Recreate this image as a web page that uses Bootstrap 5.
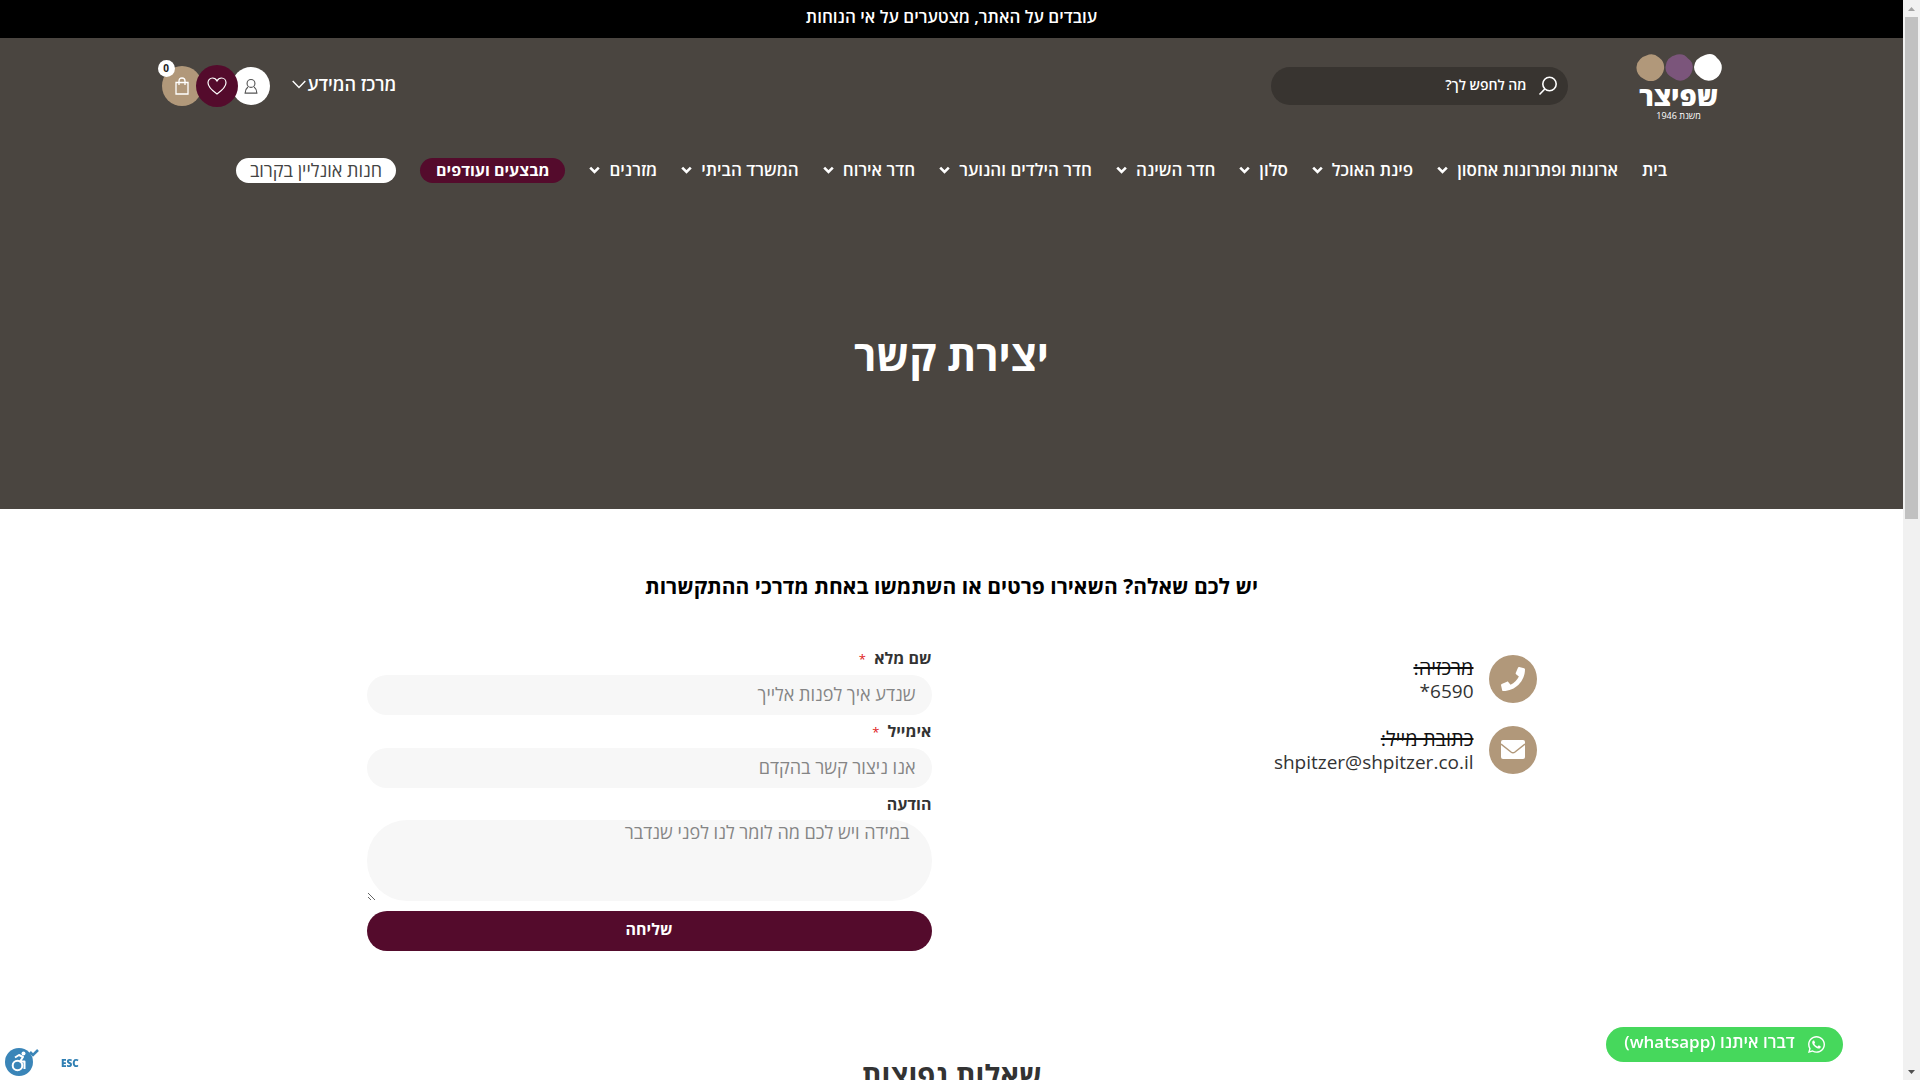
<!DOCTYPE html>
<html lang="he" dir="rtl">
<head>
<meta charset="utf-8">
<meta name="viewport" content="width=device-width, initial-scale=1">
<title>יצירת קשר - שפיצר</title>
<link href="https://cdn.jsdelivr.net/npm/bootstrap@5.3.0/dist/css/bootstrap.min.css" rel="stylesheet">
<style>
:root { --stone: #4a4540; --wine: #540b2c; --sand: #b1987a; --plum: #7b557b; --ink: #333; }
html, body { height: 100%; overflow: hidden; }
body { font-family: "Open Sans", "Noto Sans", "DejaVu Sans", sans-serif; font-size: 16px; line-height: 20px; color: var(--ink); background: #fff; }
a { text-decoration: none; color: inherit; }
svg { display: block; flex: none; }
.page-body { padding-right: 17px; }
.notice { height: 38px; padding-bottom: 4px; font-size: 17px; font-weight: 600; }
.hero { background: var(--stone); height: 471px; }
.head-row { max-width: 1586px; padding: 14px 23px 0 3px; height: 98px; }
.brand { width: 86px; color: #fff; padding-top: 1px; }
.brand-name { font-size: 27px; line-height: 29px; font-weight: 800; }
.brand-since { font-size: 9px; line-height: 12px; }
.search-pill { width: 297px; height: 38px; margin: 15px 68px 0 0; padding: 0 10px; gap: 11px; background: #383430; border-radius: 19px; }
.search-pill input { font-size: 14px; color: #fff; background: none; border: 0; outline: 0; padding: 0 0 2px; min-width: 0; }
.search-pill input::placeholder { color: #fff; opacity: 1; font-weight: 600; }
.search-pill button { background: none; border: 0; padding: 0; }
.info-link { font-size: 18px; font-weight: 600; gap: 2px; padding-top: 22px; }
.quick { margin: 13px 22px 0 0; }
.round-btn { width: 40px; height: 40px; border-radius: 50%; border: 0; padding: 0; margin-right: -6px; display: flex; align-items: center; justify-content: center; position: relative; }
.round-btn.user { background: #fff; width: 38px; height: 38px; margin-right: 0; z-index: 0; }
.round-btn.wish { background: var(--wine); width: 42px; height: 42px; z-index: 2; }
.round-btn.cart { background: var(--sand); z-index: 1; }
.count { position: absolute; left: -4px; top: -6px; width: 17px; height: 17px; border-radius: 50%; background: #fff; color: #222; font-size: 10px; line-height: 16px; font-weight: 700; }
.main-nav { gap: 24px; padding-top: 22px; font-size: 17px; font-weight: 600; color: #fff; }
.main-nav a { gap: 9px; height: 25px; padding-bottom: 2px; white-space: nowrap; }
.main-nav .tag { border-radius: 13px; padding: 0 14px 2px; }
.main-nav .tag-wine { background: var(--wine); font-size: 16px; font-weight: 700; padding: 0 16px 2px; }
.main-nav .tag-white { background: #fff; color: #444; font-size: 18px; font-weight: 400; }
.hero h1 { font-size: 42px; line-height: 52px; font-weight: 700; margin: 146px 0 0; }
.lead-line { font-size: 21px; line-height: 28px; font-weight: 700; color: #000; margin: 63px 0 48px; }
.contact-wrap { max-width: 1210px; padding: 0 20px; }
.contact-wrap > .row { --bs-gutter-x: 40px; }
.contact-list { padding-top: 7px; }
.contact-item { gap: 15px; margin-bottom: 23px; font-size: 19px; line-height: 23px; }
.contact-item .disc { width: 48px; height: 48px; border-radius: 50%; background: var(--sand); }
.contact-item .lines { padding-top: 1px; }
.contact-item s { color: #111; font-size: 20px; line-height: 20px; }
form label { font-weight: 700; display: block; line-height: 20px; margin-bottom: 6px; }
form label i { color: #e02020; font-style: normal; font-size: 13px; font-weight: 400; margin-right: 4px; }
.field { background: #f7f7f7; border: 0; border-radius: 20px; height: 40px; padding: 0 16px 2px; font-size: 18px; margin-bottom: 6px; }
.field::placeholder { color: #858585; }
textarea.field { height: 81px; border-radius: 40px; padding: 0 22px; margin-bottom: 10px; line-height: 24px; }
.send { background: var(--wine); color: #fff; border: 0; border-radius: 20px; height: 40px; font-weight: 700; padding: 0 0 4px; }
.faq { font-size: 29px; line-height: 40px; font-weight: 700; margin: 104px 0 0; }
.wa { position: fixed; right: 77px; bottom: 18px; width: 237px; height: 35px; border-radius: 18px; background: #46d85c; color: #fff; font-weight: 600; gap: 13px; }
.wa span { font-size: 17px; padding-bottom: 5px; white-space: nowrap; }
.access { position: fixed; left: 5px; bottom: 4px; gap: 21px; }
.access span { color: #2f7fb3; font-size: 10px; font-weight: 800; line-height: 10px; padding-top: 4px; }
.access button { background: none; border: 0; padding: 0; }
.rail { position: fixed; right: 0; top: 0; bottom: 0; width: 17px; background: #f1f1f1; }
.rail .thumb { width: 13px; height: 502px; background: #c1c1c1; }
</style>
</head>
<body>
<svg width="0" height="0" class="position-absolute" aria-hidden="true">
  <symbol id="chev" viewBox="0 0 11 8"><path d="M1.200 1.700 5.500 6l4.300-4.300" fill="none" stroke="#fff" stroke-width="2.600"/></symbol>
</svg>
<div class="page-body">
  <div class="notice bg-black text-white d-flex align-items-center justify-content-center">עובדים על האתר, מצטערים על אי הנוחות</div>
  <header class="hero text-white">
    <div class="head-row mx-auto d-flex align-items-start">
      <a class="brand d-flex flex-column align-items-center" href="#">
        <svg width="86" height="28" viewBox="0 0 86 28"><path d="M13 1.500Q18 0 23 4.500 29 9 28 16 27 23 20 27q-6 3-12-1Q0 22 .500 14 1 5 13 1.500" fill="#b1987a"/><path d="M41 1.500q7-1.500 11 4 6 4 4.500 11Q55 24 48 27q-6 2-11-2-8-4-7.500-11Q30 4 41 1.500" fill="#7b557b"/><path d="M69 2q8-3 12 3 6 5 4.500 12Q84 24 77 27q-7 2-12-2-7-5-7-11 1-9 11-12" fill="#fff"/></svg>
        <span class="brand-name">שפיצר</span>
        <span class="brand-since">משנת 1946</span>
      </a>
      <form class="search-pill d-flex align-items-center" role="search">
        <button type="button" aria-label="חיפוש"><svg width="20" height="20" viewBox="0 0 20 20" fill="none" stroke="#fff" stroke-width="1.600"><circle cx="11.500" cy="8" r="6.700"/><path d="M6.800 13 1.500 18.500"/></svg></button>
        <input class="flex-grow-1" type="search" aria-label="חיפוש באתר" placeholder="מה לחפש לך?">
      </form>
      <div class="flex-grow-1"></div>
      <a class="info-link d-flex align-items-center" href="#">מרכז המידע
        <svg width="14" height="9" viewBox="0 0 14 9" fill="none" stroke="#fff" stroke-width="1.400"><path d="m.700 1 6.300 6.500L13.300 1"/></svg></a>
      <div class="quick d-flex align-items-center">
        <button class="round-btn user" type="button" aria-label="החשבון שלי"><svg width="14" height="17" viewBox="0 0 16 18" fill="none" stroke="#555" stroke-width="1.300"><circle cx="8" cy="5.500" r="4.500"/><path d="M4.500 9.500C2.500 11 1.500 13 1.300 16.500h13.400C14.500 13 13.500 11 11.500 9.500"/></svg></button>
        <button class="round-btn wish" type="button" aria-label="מועדפים"><svg width="20" height="18" viewBox="0 0 20 18" fill="none" stroke="#fff" stroke-width="1.200"><path d="M10 17C5 13.500 1 10 1 5.800 1 3 3 1 5.500 1 7.500 1 9 2 10 4c1-2 2.500-3 4.500-3C17 1 19 3 19 5.800 19 10 15 13.500 10 17Z"/></svg></button>
        <button class="round-btn cart" type="button" aria-label="סל קניות"><svg width="14" height="18" viewBox="0 0 14 18" fill="none" stroke="#fff" stroke-width="1.300"><path d="M1 5.500h12v11.500H1ZM4 8V4q0-3 3-3t3 3v4"/></svg><span class="count">0</span></button>
      </div>
    </div>
    <nav class="main-nav d-flex justify-content-center">
      <a class="d-flex align-items-center" href="#">בית</a>
      <a class="d-flex align-items-center" href="#">ארונות ופתרונות אחסון <svg width="11" height="8"><use href="#chev"/></svg></a>
      <a class="d-flex align-items-center" href="#">פינת האוכל <svg width="11" height="8"><use href="#chev"/></svg></a>
      <a class="d-flex align-items-center" href="#">סלון <svg width="11" height="8"><use href="#chev"/></svg></a>
      <a class="d-flex align-items-center" href="#">חדר השינה <svg width="11" height="8"><use href="#chev"/></svg></a>
      <a class="d-flex align-items-center" href="#">חדר הילדים והנוער <svg width="11" height="8"><use href="#chev"/></svg></a>
      <a class="d-flex align-items-center" href="#">חדר אירוח <svg width="11" height="8"><use href="#chev"/></svg></a>
      <a class="d-flex align-items-center" href="#">המשרד הביתי <svg width="11" height="8"><use href="#chev"/></svg></a>
      <a class="d-flex align-items-center" href="#">מזרנים <svg width="11" height="8"><use href="#chev"/></svg></a>
      <a class="d-flex align-items-center tag tag-wine" href="#">מבצעים ועודפים</a>
      <a class="d-flex align-items-center tag tag-white" href="#">חנות אונליין בקרוב</a>
    </nav>
    <h1 class="text-center">יצירת קשר</h1>
  </header>
  <main>
    <h2 class="lead-line text-center">יש לכם שאלה? השאירו פרטים או השתמשו באחת מדרכי ההתקשרות</h2>
    <div class="contact-wrap mx-auto">
      <div class="row">
        <div class="col-6 contact-list">
          <div class="contact-item d-flex align-items-center">
            <div class="disc d-flex align-items-center justify-content-center"><svg width="24" height="24" viewBox="0 0 512 512" fill="#fff"><path d="M493.400 24.600l-104-24c-11.300-2.600-22.900 3.300-27.500 13.900l-48 112c-4.200 9.800-1.400 21.300 6.900 28l60.600 49.600c-36 76.700-98.900 140.500-177.200 177.200l-49.600-60.600c-6.800-8.300-18.200-11.100-28-6.900l-112 48C3.900 366.500-2 378.100.600 389.400l24 104C27.100 504.200 36.700 512 48 512c256.100 0 464-207.500 464-464 0-11.200-7.700-20.900-18.600-23.400z"/></svg></div>
            <div class="lines"><s>מרכזיה:</s><br><a href="tel:*6590" dir="ltr">*6590</a></div>
          </div>
          <div class="contact-item d-flex align-items-center">
            <div class="disc d-flex align-items-center justify-content-center"><svg width="24" height="24" viewBox="0 0 24 24"><rect y="2" width="24" height="19" rx="2" fill="#fff"/><path d="m0 6 10 8q2 1.500 4 0l10-8" fill="none" stroke="#b1987a" stroke-width="1.500"/></svg></div>
            <div class="lines"><s>כתובת מייל:</s><br><a href="mailto:shpitzer@shpitzer.co.il" dir="ltr">shpitzer@shpitzer.co.il</a></div>
          </div>
        </div>
        <form class="col-6">
          <label for="name">שם מלא <i>*</i></label>
          <input class="field form-control" id="name" type="text" placeholder="שנדע איך לפנות אלייך">
          <label for="email">אימייל <i>*</i></label>
          <input class="field form-control" id="email" type="email" placeholder="אנו ניצור קשר בהקדם">
          <label for="msg">הודעה</label>
          <textarea class="field form-control" id="msg" placeholder="במידה ויש לכם מה לומר לנו לפני שנדבר"></textarea>
          <button class="send w-100" type="submit">שליחה</button>
        </form>
      </div>
    </div>
    <h2 class="faq text-center">שאלות נפוצות</h2>
  </main>
</div>
<a class="wa d-flex align-items-center justify-content-center" href="#"><svg width="17" height="17" viewBox="0 0 448 448" fill="#fff"><path d="M380.900 65.100C339 23.100 283.200 0 223.900 0 101.500 0 1.900 99.600 1.900 222c0 39.100 10.200 77.300 29.600 111L0 448l117.700-30.900c32.400 17.700 68.900 27 106.100 27h.100c122.300 0 224.100-99.600 224.100-222 0-59.300-25.200-115-67.100-157zm-157 341.600c-33.200 0-65.700-8.900-94-25.700l-6.700-4-69.800 18.300L72 327.200l-4.400-7c-18.500-29.400-28.200-63.300-28.200-98.200 0-101.700 82.800-184.500 184.600-184.500 49.300 0 95.600 19.200 130.400 54.100 34.800 34.900 56.200 81.200 56.100 130.500 0 101.800-84.900 184.600-186.600 184.600zm101.200-138.200c-5.500-2.800-32.800-16.200-37.900-18-5.100-1.900-8.800-2.800-12.500 2.800-3.700 5.600-14.300 18-17.600 21.800-3.200 3.700-6.500 4.200-12 1.400-32.600-16.300-54-29.100-75.500-66-5.700-9.800 5.700-9.100 16.300-30.300 1.800-3.700.9-6.900-.5-9.700s-12.500-30.100-17.100-41.200c-4.500-10.800-9.100-9.300-12.500-9.500-3.200-.2-6.900-.2-10.600-.2s-9.700 1.400-14.800 6.900c-5.100 5.600-19.400 19-19.400 46.300s19.900 53.700 22.600 57.400c2.800 3.700 39.100 59.700 94.800 83.800 35.200 15.200 49 16.500 66.600 13.900 10.700-1.600 32.800-13.400 37.400-26.400s4.600-24.100 3.200-26.400c-1.300-2.500-5-3.900-10.500-6.600z"/></svg><span>דברו איתנו (whatsapp)</span></a>
<div class="access d-flex align-items-center" dir="ltr">
  <button type="button" aria-label="נגישות"><svg width="35" height="30" viewBox="0 0 35 30"><circle cx="14" cy="16" r="14" fill="#3a85b8"/><g fill="none" stroke="#fff" stroke-width="2"><circle cx="12.500" cy="19.500" r="4.800"/><path d="M10 11.500 14 9l4 2-3 4.500h4.500V23" stroke-linejoin="round"/></g><circle cx="18.500" cy="7.500" r="2" fill="#fff"/><path d="m25 6 3 3 5-5" fill="none" stroke="#3a85b8" stroke-width="2.500"/></svg></button>
  <span>ESC</span>
</div>
<div class="rail d-flex flex-column align-items-center justify-content-between" aria-hidden="true">
  <div class="d-flex flex-column align-items-center"><svg width="17" height="17" viewBox="0 0 17 17"><path d="M5 11h7l-3.500-4Z" fill="#a3a3a3"/></svg><div class="thumb"></div></div>
  <svg width="17" height="17" viewBox="0 0 17 17"><path d="M5 7h7l-3.500 4Z" fill="#505050"/></svg>
</div>
<script src="https://cdn.jsdelivr.net/npm/bootstrap@5.3.0/dist/js/bootstrap.bundle.min.js"></script>
</body>
</html>
